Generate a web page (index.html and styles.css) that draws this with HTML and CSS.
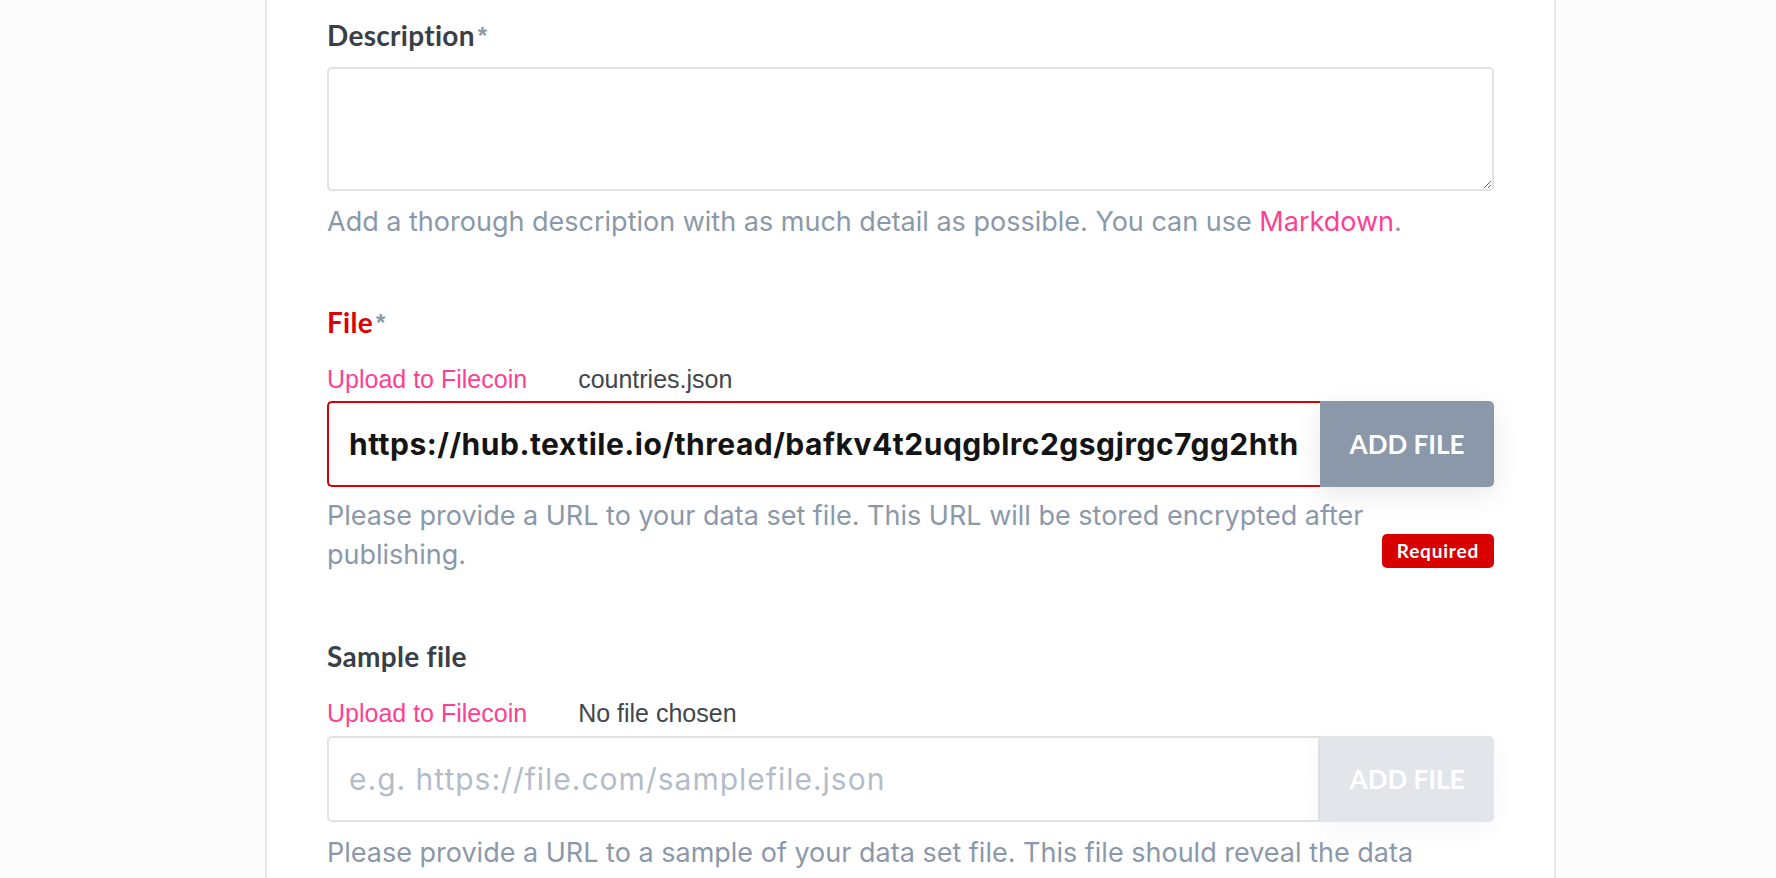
FILE: index.html
```html
<!DOCTYPE html>
<html lang="en">
<head>
<meta charset="utf-8">
<title>Publish data set</title>
<link rel="stylesheet" href="styles.css">
</head>
<body>
<div class="page">
  <form class="card">
    <div class="field">
      <label class="label" for="desc">Description<span class="req">*</span></label>
      <textarea class="textarea" id="desc"></textarea>
      <p class="help">Add a thorough description with as much detail as possible. You can use <a class="link" href="#">Markdown</a>.</p>
    </div>

    <div class="field">
      <label class="label label-error" for="file">File<span class="req">*</span></label>
      <div class="upload-row">
        <span class="upload-link">Upload to Filecoin</span>
        <span class="file-name">countries.json</span>
      </div>
      <div class="input-group input-group-error">
        <input class="input input-filled" id="file" type="text" value="https://hub.textile.io/thread/bafkv4t2uqgblrc2gsgjrgc7gg2hth">
        <button class="btn" type="button">ADD FILE</button>
      </div>
      <div class="help-row">
        <p class="help help-narrow">Please provide a URL to your data set file. This URL will be stored encrypted after publishing.</p>
        <span class="badge">Required</span>
      </div>
    </div>

    <div class="field field-sample">
      <label class="label" for="sample">Sample file</label>
      <div class="upload-row">
        <span class="upload-link">Upload to Filecoin</span>
        <span class="file-name">No file chosen</span>
      </div>
      <div class="input-group">
        <input class="input" id="sample" type="text" placeholder="e.g. https://file.com/samplefile.json">
        <button class="btn btn-disabled" type="button" disabled>ADD FILE</button>
      </div>
      <p class="help">Please provide a URL to a sample of your data set file. This file should reveal the data structure of your data set.</p>
    </div>
  </form>
</div>
</body>
</html>
```

FILE: styles.css
```css
* { box-sizing: border-box; }

html, body {
  margin: 0;
  padding: 0;
  background: #fcfcfc;
  overflow: hidden;
}

.page {
  display: flex;
  padding-left: 265px;
}

.card {
  width: 1291px;
  background: #ffffff;
  border-left: 2px solid #e6e6e6;
  border-right: 2px solid #e6e6e6;
  padding: 19px 60px 0 60px;
  font-family: Lato, "Liberation Sans", sans-serif;
  min-height: 1200px;
}

.field {
  display: flex;
  flex-direction: column;
  margin-bottom: 65px;
}

.label {
  font-size: 28px;
  line-height: 1.2;
  font-weight: 700;
  color: #3a3f46;
  letter-spacing: 0.3px;
}

.label-error { color: #dc0000; }

.req {
  position: relative;
  top: -2px;
  color: #8b98a9;
  font-family: "Liberation Sans", Arial, sans-serif;
  font-weight: 700;
  font-size: 24px;
  margin-left: 3px;
  letter-spacing: 0;
}

.textarea {
  margin-top: 14px;
  height: 124px;
  border: 2px solid #e2e2e2;
  border-radius: 5px;
  background: #fff;
  resize: vertical;
  font-family: inherit;
  font-size: 27px;
  padding: 14px 20px;
  outline: none;
}

.help {
  margin: 11px 0 0 0;
  font-family: Inter, Lato, sans-serif;
  font-size: 27px;
  line-height: 39px;
  color: #8b98a9;
}

.link {
  color: #ff4092;
  text-decoration: none;
}

.upload-row {
  margin-top: 25px;
  display: flex;
  align-items: baseline;
  font-family: "Liberation Sans", Arial, sans-serif;
  font-size: 25px;
  line-height: 1.149;
}

.upload-link {
  color: #ff4092;
  margin-right: 51px;
}

.file-name {
  color: #41464d;
}

.input-group {
  margin-top: 8px;
  display: flex;
  height: 86px;
}

.input {
  flex: 1;
  min-width: 0;
  height: 86px;
  border: 2px solid #e2e2e2;
  border-radius: 5px 0 0 5px;
  padding: 0 20px;
  font-family: Inter, Lato, sans-serif;
  font-size: 30px;
  letter-spacing: 0.5px;
  color: #141414;
  background: #fff;
  outline: none;
}

.input::placeholder {
  color: #b3bcc8;
  font-weight: 400;
  letter-spacing: 1px;
}

.input-filled { font-weight: 700; }

.input-group-error .input {
  border-color: #d80000;
  border-right: none;
}

.btn {
  width: 174px;
  border: none;
  border-radius: 0 5px 5px 0;
  background: #8b98a9;
  color: #ffffff;
  font-family: Lato, sans-serif;
  font-weight: 700;
  font-size: 26px;
  box-shadow: 0 8px 28px rgba(0, 0, 0, 0.09);
}

.btn-disabled {
  background: #e2e5ea;
  box-shadow: 0 8px 28px rgba(0, 0, 0, 0.04);
}

.help-row {
  display: flex;
  align-items: flex-end;
  justify-content: space-between;
  gap: 0;
  padding-bottom: 1px;
}

.help-row .help { margin-top: 9px; }

.help-narrow {
  max-width: 1054px;
}

.badge {
  flex: none;
  background: #d80000;
  color: #fff;
  font-family: Lato, sans-serif;
  font-weight: 700;
  font-size: 19px;
  letter-spacing: 0.8px;
  line-height: 34px;
  height: 34px;
  padding: 0 15px;
  border-radius: 5px;
  margin-bottom: 6px;
}
```
